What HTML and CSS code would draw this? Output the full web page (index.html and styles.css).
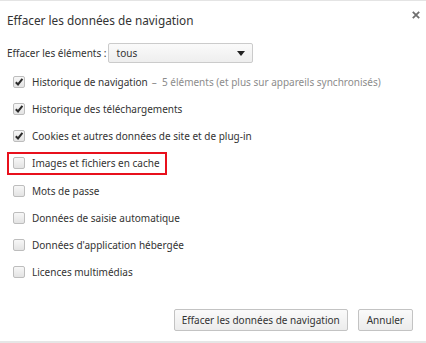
FILE: index.html
```html
<!DOCTYPE html>
<html lang="fr">
<head>
<meta charset="utf-8">
<link rel="stylesheet" href="styles.css">
</head>
<body>
<div class="dialog">
  <div class="header">
    <h1 class="title">Effacer les données de navigation</h1>
    <span class="close">
      <svg width="8" height="8" viewBox="0 0 8 8"><path d="M0.8 0.8L7.2 7.2M7.2 0.8L0.8 7.2" stroke="#6f6f6f" stroke-width="1.8"/></svg>
    </span>
  </div>
  <div class="period">
    <span class="period-label">Effacer les éléments :</span>
    <div class="select">
      <span>tous</span>
      <svg width="8" height="5" viewBox="0 0 8 5"><path d="M0 0H8L4 5Z" fill="#222"/></svg>
    </div>
  </div>
  <ul class="list">
    <li class="row"><span class="box"><svg class="tick" width="10" height="10" viewBox="0 0 10 10"><path d="M1.8 5.2L4 7.4L8.4 1.8" fill="none" stroke="#2b2b2b" stroke-width="2"/></svg></span><span class="label">Historique de navigation</span><span class="note">–&nbsp; 5 éléments (et plus sur appareils synchronisés)</span></li>
    <li class="row"><span class="box"><svg class="tick" width="10" height="10" viewBox="0 0 10 10"><path d="M1.8 5.2L4 7.4L8.4 1.8" fill="none" stroke="#2b2b2b" stroke-width="2"/></svg></span><span class="label">Historique des téléchargements</span></li>
    <li class="row"><span class="box"><svg class="tick" width="10" height="10" viewBox="0 0 10 10"><path d="M1.8 5.2L4 7.4L8.4 1.8" fill="none" stroke="#2b2b2b" stroke-width="2"/></svg></span><span class="label">Cookies et autres données de site et de plug-in</span></li>
    <li class="row"><span class="highlight"><span class="box"></span><span class="label">Images et fichiers en cache</span></span></li>
    <li class="row"><span class="box"></span><span class="label">Mots de passe</span></li>
    <li class="row"><span class="box"></span><span class="label">Données de saisie automatique</span></li>
    <li class="row"><span class="box"></span><span class="label">Données d'application hébergée</span></li>
    <li class="row"><span class="box"></span><span class="label">Licences multimédias</span></li>
  </ul>
  <div class="actions">
    <button class="btn btn-main">Effacer les données de navigation</button>
    <button class="btn">Annuler</button>
  </div>
</div>
</body>
</html>
```
FILE: styles.css
```css
html, body {
  margin: 0;
  padding: 0;
  background: #fff;
}
body {
  font-family: "Noto Sans", "Open Sans", sans-serif;
  color: #333;
  font-size: 10px;
}
.dialog {
  width: 426px;
  height: 343px;
  box-sizing: border-box;
  border-top: 1px solid #e4e4e4;
  border-bottom: 2px solid #e6e6e6;
  display: flex;
  flex-direction: column;
}
.header {
  display: flex;
  justify-content: space-between;
  align-items: flex-start;
  padding: 9px 6px 0 7px;
  height: 33px;
  box-sizing: border-box;
}
.title {
  margin: 0;
  font-size: 11.8px;
  font-weight: normal;
  color: #333;
  line-height: 20px;
}
.close {
  margin-top: 1px;
  display: flex;
}
.period {
  display: flex;
  align-items: center;
  padding-left: 7px;
  gap: 1px;
  margin-top: 9px;
  height: 20px;
}
.select {
  width: 145px;
  height: 20px;
  box-sizing: border-box;
  border: 1px solid #cbcbcb;
  border-radius: 2px;
  background: linear-gradient(#fafafa, #eeeeee);
  display: flex;
  align-items: center;
  justify-content: space-between;
  padding: 0 7px 0 8px;
  color: #333;
}
.list {
  list-style: none;
  margin: 5.5px 0 0 0;
  padding: 0 0 0 7px;
}
.row {
  height: 27.15px;
  display: flex;
  align-items: center;
  padding-left: 6px;
}
.box {
  width: 12px;
  height: 12px;
  box-sizing: border-box;
  border: 1px solid #bdbdbd;
  border-radius: 2px;
  background: linear-gradient(#f7f7f7, #e3e3e3);
  margin-right: 7px;
  flex: none;
  display: flex;
  align-items: center;
  justify-content: center;
}
.label {
  color: #333;
}
.note {
  color: #8c8c8c;
  margin-left: 4px;
}
.row .highlight {
  display: flex;
  align-items: center;
  border: 2px solid #e8101c;
  height: 23px;
  box-sizing: border-box;
  margin-left: -6px;
  padding-left: 4px;
  padding-right: 5px;
}
.actions {
  margin-top: auto;
  display: flex;
  justify-content: flex-end;
  gap: 10px;
  padding: 0 13px 10px 0;
}
.btn {
  font-family: inherit;
  font-size: 10px;
  color: #333;
  height: 22px;
  padding: 0 8px;
  border: 1px solid #c3c3c3;
  border-radius: 2px;
  background: linear-gradient(#fafafa, #ececec);
}
.btn-main {
  padding: 0 7px;
}
```
